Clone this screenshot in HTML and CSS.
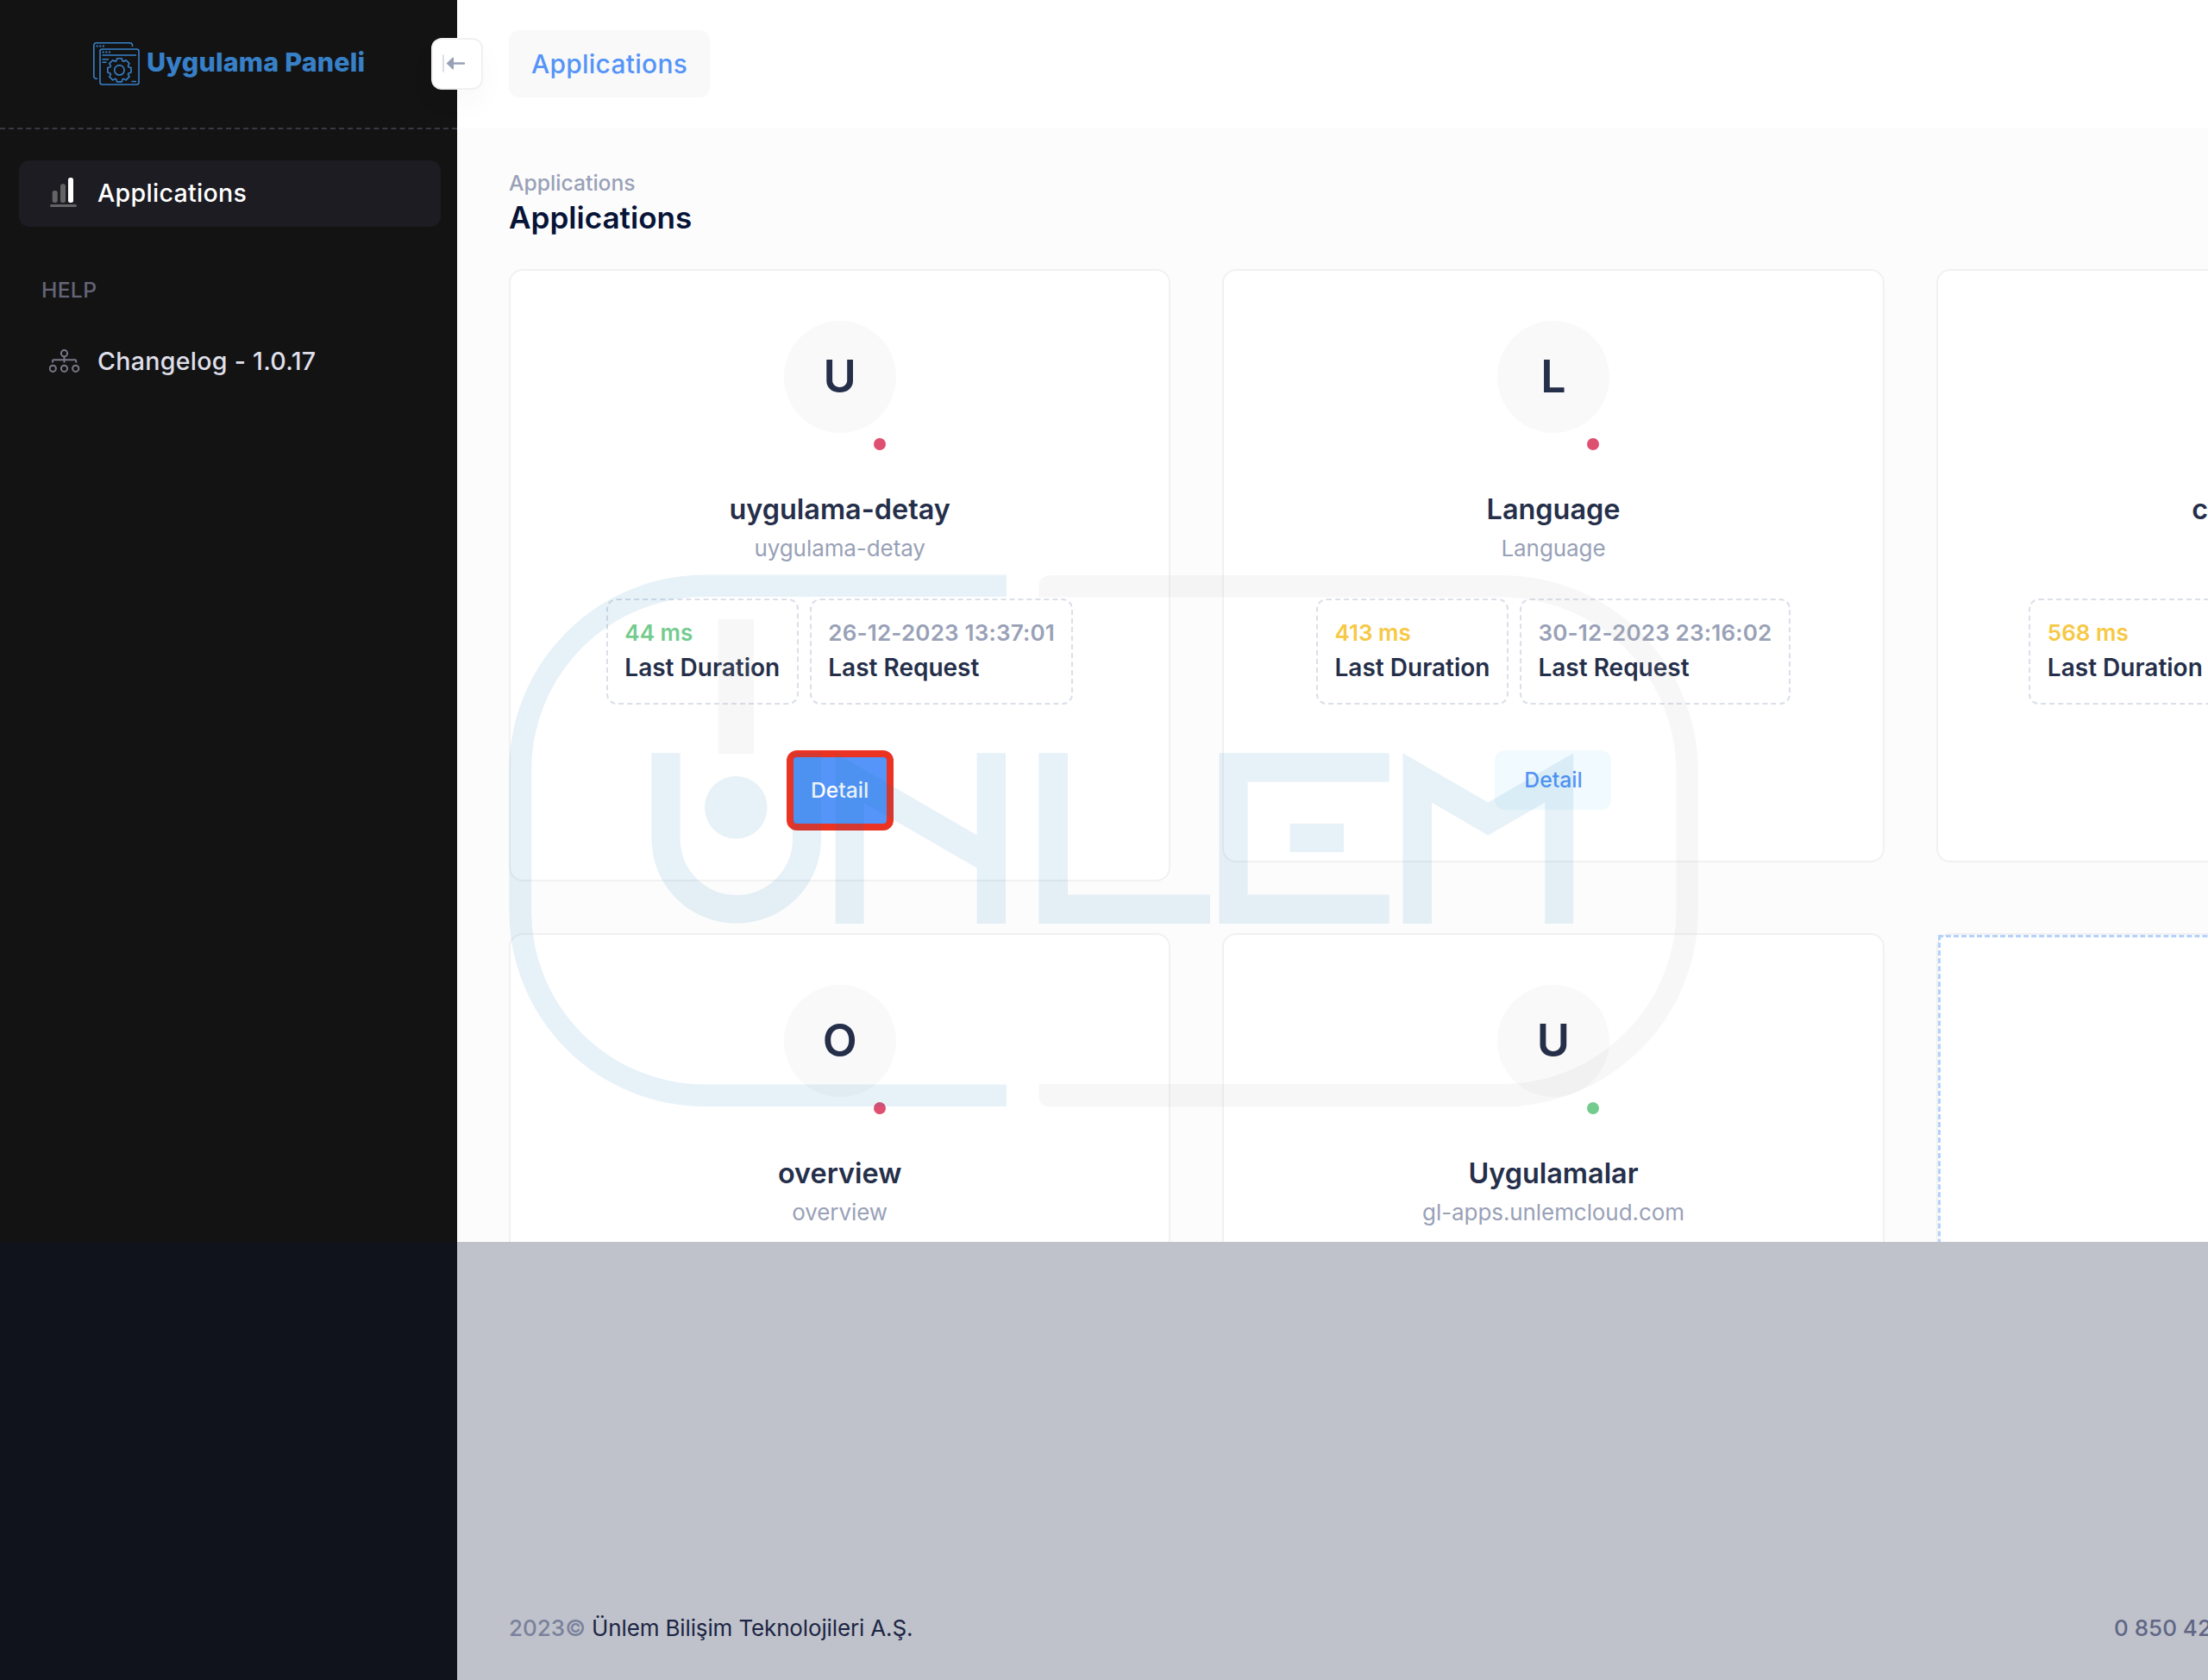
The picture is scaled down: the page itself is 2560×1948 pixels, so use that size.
FILE: index.html
```html
<!DOCTYPE html>
<html lang="tr">
<head>
<meta charset="utf-8">
<title>Uygulama Paneli</title>
<link rel="stylesheet" href="styles.css">
</head>
<body>
<div class="app">
  <aside class="sidebar">
    <div class="brand">
      <svg class="brand-icon" width="54" height="50" viewBox="0 0 54 50" fill="none" stroke="#3780c8" stroke-width="1.600">
        <path d="M45.500 5V3.500a3 3 0 0 0-3-2.700H3.500a2.700 2.700 0 0 0-2.700 2.700V39.500a2.700 2.700 0 0 0 2.700 2.700H5"/>
        <rect x="8" y="8" width="45" height="41" rx="2.500"/>
        <path d="M3.700 4.500h10M10.700 11.400h10" stroke-width="2" stroke-dasharray="2 1.600"/>
        <path d="M10.500 15h39.500M10.500 19.800h7.500M10.500 23.300h5M44.500 45.500h5.500"/>
        <g transform="translate(30.400 32.300)">
          <circle r="5.700"/>
          <path stroke-linejoin="round" d="M-3.600-10.600L-2.800-13.600H2.800L3.600-10.600L4.950-10.040L7.640-11.600L11.600-7.640L10.040-4.950L10.600-3.600L13.600-2.800V2.800L10.600 3.600L10.040 4.950L11.600 7.640L7.640 11.600L4.950 10.040L3.600 10.600L2.800 13.600H-2.800L-3.600 10.600L-4.950 10.040L-7.640 11.600L-11.600 7.640L-10.040 4.950L-10.600 3.600L-13.600 2.800V-2.800L-10.600-3.600L-10.040-4.950L-11.600-7.640L-7.640-11.600L-4.950-10.040z"/>
        </g>
      </svg>
      <span class="brand-name">Uygulama Paneli</span>
    </div>
    <nav class="menu">
      <a class="menu-item active">
        <svg width="36" height="36" viewBox="0 0 36 36">
          <g fill="#646466"><rect x="3.700" y="15" width="6" height="14" rx="2.500"/><rect x="13" y="7.300" width="6" height="21.700" rx="2.500"/><rect x="1" y="31" width="31" height="3" rx="1.500"/></g>
          <rect x="22" y="0" width="6" height="29" rx="2.500" fill="#fff"/>
        </svg>
        <span>Applications</span>
      </a>
      <div class="menu-heading">HELP</div>
      <a class="menu-item">
        <svg width="36" height="28" viewBox="0 0 36 28" fill="none" stroke="#787887" stroke-width="2">
          <circle cx="17.500" cy="4.700" r="3.600"/><circle cx="4.300" cy="22.300" r="3.600"/><circle cx="17.500" cy="22.300" r="3.600"/><circle cx="30.700" cy="22.300" r="3.600"/>
          <path d="M17.500 8.500V15.500M4 15.500V13.500q0-1.200 1.200-1.200H30q1.200 0 1.200 1.200v2"/>
        </svg>
        <span>Changelog - 1.0.17</span>
      </a>
    </nav>
    <div class="toggle">
      <svg width="30" height="24" viewBox="0 0 30 24">
        <rect x="1" y="1.300" width="2" height="20.700" rx="1" fill="#dcdee6"/>
        <path d="M5.600 11.500L12.600 4.800q1.400-.8 1.400.8V10.300H26a1.200 1.200 0 0 1 0 2.400H14V17.400q0 1.600-1.400.8z" fill="#99a1b7"/>
      </svg>
    </div>
  </aside>

  <main class="main">
    <header class="topbar"><a class="top-link">Applications</a></header>
    <section class="content">
      <div class="crumb">Applications</div>
      <h1 class="title">Applications</h1>
      <div class="grid">
        <article class="card">
          <div class="avatar">U<i class="dot"></i></div>
          <div class="name">uygulama-detay</div>
          <div class="sub">uygulama-detay</div>
          <div class="stats">
            <div class="stat"><b class="green">44 ms</b><span>Last Duration</span></div>
            <div class="stat"><b class="date">26-12-2023 13:37:01</b><span>Last Request</span></div>
          </div>
          <a class="btn highlight">Detail</a>
        </article>
        <article class="card">
          <div class="avatar">L<i class="dot"></i></div>
          <div class="name">Language</div>
          <div class="sub">Language</div>
          <div class="stats">
            <div class="stat"><b class="yellow">413 ms</b><span>Last Duration</span></div>
            <div class="stat"><b class="date">30-12-2023 23:16:02</b><span>Last Request</span></div>
          </div>
          <a class="btn">Detail</a>
        </article>
        <article class="card">
          <div class="avatar"></div>
          <div class="name name-wide">c</div>
          <div class="sub"></div>
          <div class="stats">
            <div class="stat"><b class="yellow">568 ms</b><span>Last Duration</span></div>
            <div class="stat stat-wide"></div>
          </div>
          <a class="btn"></a>
        </article>
        <article class="card">
          <div class="avatar">O<i class="dot"></i></div>
          <div class="name">overview</div>
          <div class="sub">overview</div>
        </article>
        <article class="card">
          <div class="avatar">U<i class="dot online"></i></div>
          <div class="name">Uygulamalar</div>
          <div class="sub">gl-apps.unlemcloud.com</div>
        </article>
        <article class="card card-new"><div class="dropzone"></div></article>
      </div>
    </section>
  </main>

  <div class="sidebar-foot"></div>
  <footer class="footer">
    <div class="copy"><span class="year">2023©</span> Ünlem Bilişim Teknolojileri A.Ş.</div>
    <div class="phone">0 850 42</div>
  </footer>

  <svg class="watermark" width="1380" height="618" viewBox="590 666 1380 618" fill="none">
    <g fill="#0576b9" stroke="#0576b9" stroke-width="0" opacity=".095">
      <path d="M1167 679.300H817A214 214 0 0 0 603.200 893V1057A214 214 0 0 0 817 1270.200H1167" fill="none" stroke-width="25.600"/>
      <circle cx="853.300" cy="936.300" r="36.300"/>
      <path d="M772 873.300V972.500a81.750 81.750 0 0 0 163.500 0V873.300" fill="none" stroke-width="33"/>
      <path d="M968.700 873.300L1132.700 968.500V873.300H1166V1071H1132.700V1006.500L1001.500 930.700V1071H968.700z"/>
      <path d="M1204.500 873.300H1238V1037.500H1403V1071H1204.500z"/>
      <path d="M1413.500 873.300H1610.700V906.600H1446.500V1037.500H1610.700V1071H1413.500z"/>
      <path d="M1495.700 955H1558V988H1495.700z"/>
      <path d="M1626.500 873.300L1725.300 930.400L1824.200 873.300V1071H1791.200V930.600L1725.300 968.600L1660 930.600V1071H1626.500z"/>
    </g>
    <g fill="#afafaf" opacity=".1">
      <path d="M832.700 718H874V874H832.700z"/>
      <path d="M1204.500 692.500V681q0-14 14-14H1741A228 228 0 0 1 1969 895V1055A228 228 0 0 1 1741 1283.500H1218.500q-14 0-14-14V1257H1741A202.500 202.500 0 0 0 1943.500 1055V895A202.500 202.500 0 0 0 1741 692.500z"/>
    </g>
  </svg>
</div>
</body>
</html>
```
FILE: styles.css
```css
* { box-sizing: border-box; }
html { overflow: hidden; }
body {
  width: 2560px;
  height: 1948px;
  margin: 0;
  overflow: hidden;
  font-family: Inter, "Liberation Sans", sans-serif;
  color: #252f4a;
}
.app {
  position: relative;
  width: 3072px;
  display: grid;
  grid-template-columns: 530px 1fr;
  grid-template-rows: 1440px 508px;
}

/* Sidebar */
.sidebar { position: relative; background: #131313; }
.brand {
  height: 150px;
  padding: 0 0 0 108px;
  display: flex;
  align-items: center;
  gap: 8px;
  border-bottom: 2px dashed #393945;
}
.brand-name {
  padding-bottom: 4px;
  font-size: 30.500px;
  font-weight: 800;
  line-height: 40px;
  letter-spacing: .15px;
  color: #3780c8;
  white-space: nowrap;
}
.menu { padding: 36px 19px 0 22px; }
.menu-item {
  height: 77px;
  padding: 0 0 2px 35px;
  display: flex;
  align-items: center;
  border-radius: 12px;
  font-size: 28.600px;
  font-weight: 500;
  letter-spacing: .27px;
  color: #dfdfe9;
}
.menu-item svg { width: 36px; margin-right: 20px; flex: none; }
.menu-item.active { background: #1c1c22; color: #fff; }
.menu-heading {
  margin: 53px 0 25px 26px;
  font-size: 24.700px;
  font-weight: 500;
  letter-spacing: .3px;
  line-height: 40px;
  color: #646477;
}
.toggle {
  position: absolute;
  z-index: 2;
  left: 500px;
  top: 44px;
  width: 60px;
  height: 60px;
  padding-left: 10px;
  display: flex;
  align-items: center;
  border: 2px solid #f1f1f2;
  border-radius: 12px;
  background: #fff;
  box-shadow: 0 16px 28px 6px rgba(0, 0, 0, .02);
}

/* Main column */
.main { background: #fcfcfc; overflow: hidden; }
.topbar {
  height: 148px;
  padding-left: 60px;
  display: flex;
  align-items: center;
  background: #fff;
}
.top-link {
  width: 233px;
  height: 78px;
  display: flex;
  align-items: center;
  justify-content: center;
  border-radius: 12px;
  background: #f9f9f9;
  font-size: 29.900px;
  font-weight: 500;
  letter-spacing: .3px;
  color: #5594f8;
}
.content { padding: 46px 60px 0; }
.crumb { font-size: 24.700px; font-weight: 500; line-height: 36px; color: #99a1b7; }
.title {
  margin: 0 0 38px;
  font-size: 35.100px;
  font-weight: 600;
  line-height: 44px;
  color: #071437;
}
.grid {
  display: grid;
  grid-template-columns: repeat(3, 1fr);
  gap: 60px;
  align-items: start;
}
.card {
  min-height: 688px;
  padding: 58px 0 57px;
  display: flex;
  flex-direction: column;
  align-items: center;
  border: 2px solid #f1f1f2;
  border-radius: 16px;
  background: #fff;
}
.avatar {
  position: relative;
  width: 130px;
  height: 130px;
  padding-bottom: 2px;
  display: flex;
  align-items: center;
  justify-content: center;
  border-radius: 50%;
  background: #f9f9f9;
  font-size: 52px;
  font-weight: 600;
}
.dot {
  position: absolute;
  left: 104px;
  top: 136px;
  width: 14px;
  height: 14px;
  border-radius: 50%;
  background: #df4f70;
}
.dot.online { background: #74cb8e; }
.name { margin-top: 69px; font-size: 32.400px; font-weight: 600; line-height: 40px; }
.name-wide { width: 174px; }
.sub { height: 34px; margin-top: 8px; font-size: 26px; line-height: 34px; letter-spacing: -.08px; color: #99a1b7; }
.stats { margin-top: 41px; display: flex; gap: 13px; }
.stat {
  height: 123px;
  padding: 18px 19.500px 0;
  display: flex;
  flex-direction: column;
  border: 2px dashed #dbdfe9;
  border-radius: 12px;
  font-weight: 600;
  line-height: 40px;
  white-space: nowrap;
}
.stat b { font-size: 26px; font-weight: 600; color: #99a1b7; }
.stat b.date { letter-spacing: .19px; }
.stat span { font-size: 28px; }
.stat b.green { color: #74cb8e; }
.stat b.yellow { color: #f7c843; }
.stat-wide { width: 316px; }
.btn {
  width: 135px;
  height: 69px;
  margin-top: 53px;
  padding-bottom: 2px;
  display: flex;
  align-items: center;
  justify-content: center;
  border-radius: 12px;
  background: #f1fafe;
  font-size: 24.700px;
  font-weight: 500;
  color: #5594f8;
}
.btn.highlight {
  width: 124px;
  height: 93px;
  border: 8px solid #ea3323;
  background: #5594f8;
  color: #fff;
}
.card-new { padding: 0; align-items: stretch; }
.dropzone { flex: 1; border: 3px dashed #b4d2fc; }

/* Bottom strip */
.sidebar-foot { background: #10131c; }
.footer {
  padding: 428px 0 0 60px;
  display: flex;
  background: #bfc2cb;
  font-size: 26px;
  line-height: 40px;
  color: #1c2543;
  letter-spacing: -.14px;
  white-space: nowrap;
}
.copy { width: 1861px; }
.year { font-weight: 500; letter-spacing: 0; color: #7a819b; }
.phone { font-weight: 500; letter-spacing: 0; color: #5f6785; }

/* Logo mark laid over the page */
.watermark { position: absolute; left: 590px; top: 666px; pointer-events: none; }
```
